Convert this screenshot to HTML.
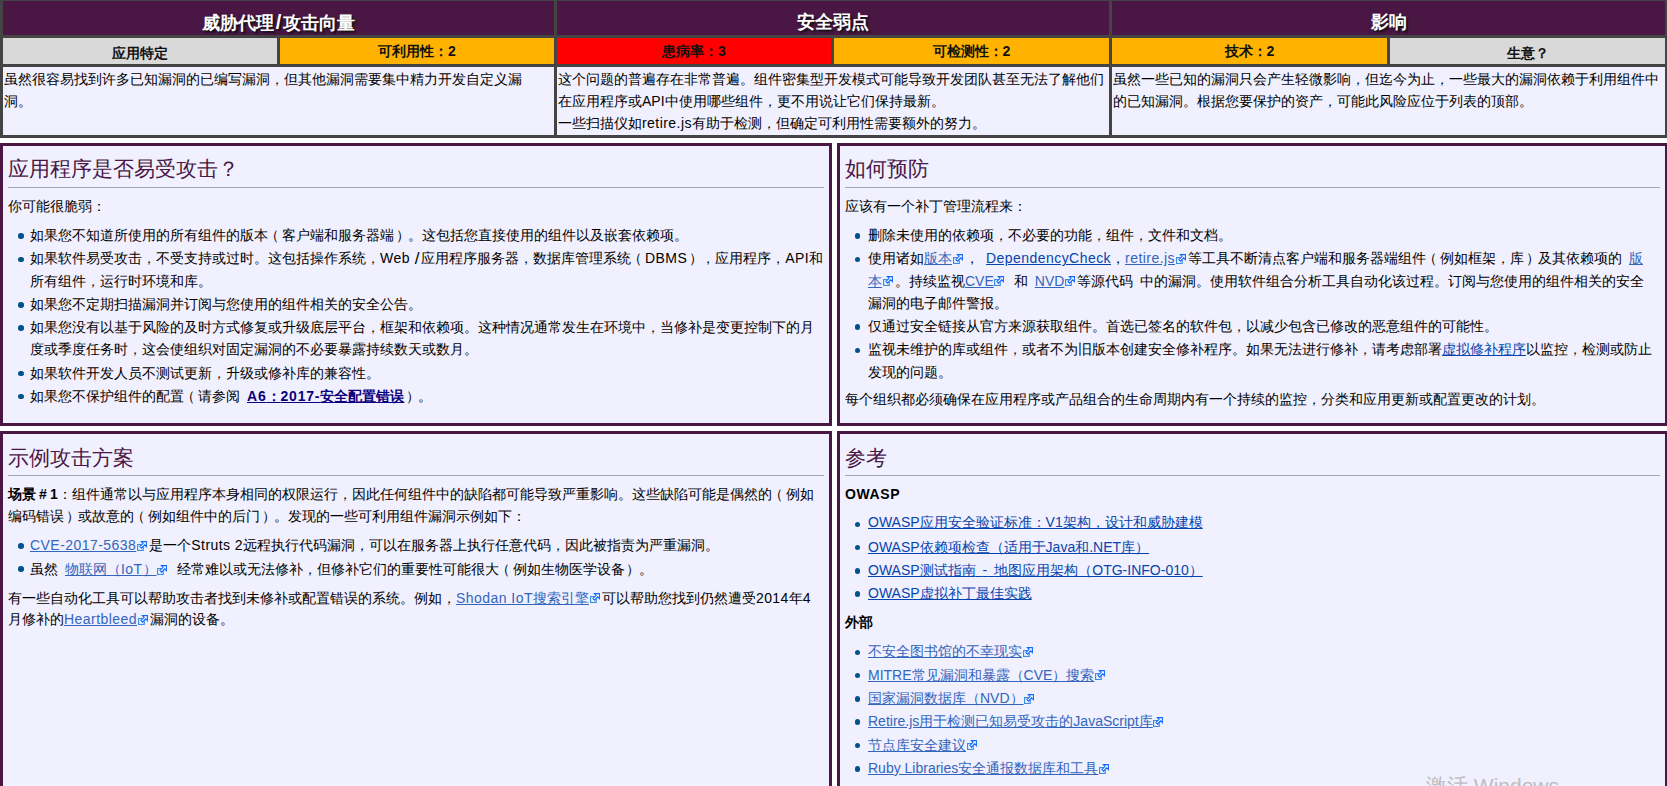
<!DOCTYPE html>
<html lang="ja"><head><meta charset="utf-8"><style>
*{box-sizing:border-box}
html,body{margin:0;padding:0;background:#fff;overflow:hidden}
body{width:1667px;height:786px;position:relative;font-family:"Liberation Sans",sans-serif;font-size:14px;color:#000}
.c{position:absolute}
.h{background:#4a1745;color:#fff;font-weight:bold;font-size:18px;text-align:center;line-height:42px;text-shadow:2px 2px 2px #111}
.s{font-weight:bold;text-align:center;color:#111}
.g{background:#d9d9d9}.o{background:#ffb300}.r{background:#ff0000}
.ct{background:#f0f0ff}
.box{position:absolute;border:3px solid #4a1745;background:#f0f0ff}
.ln{position:absolute;white-space:nowrap;line-height:22px}
.ttl{position:absolute;white-space:nowrap;font-size:21px;line-height:30px;color:#4a1745}
.hr{position:absolute;height:1px;background:#a2a9b1}
.d{position:absolute;width:5.5px;height:5.5px;border-radius:50%;background:#00528c}
a{text-decoration:underline}
.x{color:#3366bb}
.i{color:#0645ad}
.v{color:#0b0080}
b{font-weight:bold;color:#000}
.v b{color:#0b0080}
.e{display:inline-block;width:13px;height:10px;position:relative;vertical-align:0px}
.e svg{position:absolute;left:0.7px;top:0.5px}
.sp{word-spacing:3.1px}
.sp3{display:inline-block;width:3px}
.l{letter-spacing:0.45px}
.lb{letter-spacing:0.8px}
.lp{position:relative;left:-3px}
.rp{position:relative;left:1.5px}
.wm{position:absolute;white-space:nowrap;font-size:21px;color:#bdbdc2;line-height:30px}
</style></head><body>
<div class="c" style="left:0;top:-2px;width:1668px;height:140px;background:#444"></div>
<div class="c h" style="left:3px;top:1px;width:551px;height:34px">威胁代理<span style="margin:0 2px;font-size:20px">/</span>攻击向量</div>
<div class="c h" style="left:557px;top:1px;width:552px;height:34px">安全弱点</div>
<div class="c h" style="left:1112px;top:1px;width:553px;height:34px">影响</div>
<div class="c s g" style="left:3px;top:38px;width:274px;height:26px;line-height:30px">应用特定</div>
<div class="c s o" style="left:280px;top:38px;width:274px;height:26px;line-height:26px">可利用性：2</div>
<div class="c s r" style="left:557px;top:38px;width:274px;height:26px;line-height:26px">患病率：3</div>
<div class="c s o" style="left:834px;top:38px;width:275px;height:26px;line-height:26px">可检测性：2</div>
<div class="c s o" style="left:1112px;top:38px;width:275px;height:26px;line-height:26px">技术：2</div>
<div class="c s g" style="left:1390px;top:38px;width:275px;height:26px;line-height:30px">生意？</div>
<div class="c ct" style="left:3px;top:67px;width:551px;height:68px"></div>
<div class="c ct" style="left:557px;top:67px;width:552px;height:68px"></div>
<div class="c ct" style="left:1112px;top:67px;width:553px;height:68px"></div>
<div class="ln" style="left:4px;top:67.6px">虽然很容易找到许多已知漏洞的已编写漏洞，但其他漏洞需要集中精力开发自定义漏</div>
<div class="ln" style="left:4px;top:90.0px">洞。</div>
<div class="ln" style="left:558px;top:67.6px">这个问题的普遍存在非常普遍。组件密集型开发模式可能导致开发团队甚至无法了解他们</div>
<div class="ln" style="left:558px;top:90.0px">在应用程序或API中使用哪些组件，更不用说让它们保持最新。</div>
<div class="ln" style="left:558px;top:112.4px">一些扫描仪如<span class="l">retire.js</span>有助于检测，但确定可利用性需要额外的努力。</div>
<div class="ln" style="left:1113px;top:67.6px">虽然一些已知的漏洞只会产生轻微影响，但迄今为止，一些最大的漏洞依赖于利用组件中</div>
<div class="ln" style="left:1113px;top:90.0px">的已知漏洞。根据您要保护的资产，可能此风险应位于列表的顶部。</div>
<div class="box" style="left:0;top:143px;width:832px;height:283px"></div>
<div class="box" style="left:837px;top:143px;width:831px;height:283px"></div>
<div class="box" style="left:0;top:431px;width:832px;height:400px"></div>
<div class="box" style="left:837px;top:431px;width:831px;height:400px"></div>
<div class="ttl" style="left:8px;top:154.0px">应用程序是否易受攻击？</div>
<div class="hr" style="left:8px;top:187px;width:816px"></div>
<div class="ln" style="left:8px;top:194.5px">你可能很脆弱：</div>
<div class="d" style="left:18.25px;top:233.45px"></div>
<div class="ln" style="left:30px;top:224.3px">如果您不知道所使用的所有组件的版本<span class="lp">（</span>客户端和服务器端<span class="rp">）</span>。这包括您直接使用的组件以及嵌套依赖项。</div>
<div class="d" style="left:18.25px;top:256.55px"></div>
<div class="ln" style="left:30px;top:247.4px">如果软件易受攻击，不受支持或过时。这包括操作系统，<span class="l">Web </span><span style="font-size:17px;display:inline-block;transform:translateY(1px);margin-left:0.5px;margin-right:1.5px">/</span>应用程序服务器，数据库管理系统<span class="lp">（</span><span class="l">DBMS</span><span class="rp">）</span>，应用程序，<span class="l">API</span>和</div>
<div class="ln" style="left:30px;top:269.8px">所有组件，运行时环境和库。</div>
<div class="d" style="left:18.25px;top:302.05px"></div>
<div class="ln" style="left:30px;top:292.9px">如果您不定期扫描漏洞并订阅与您使用的组件相关的安全公告。</div>
<div class="d" style="left:18.25px;top:325.15px"></div>
<div class="ln" style="left:30px;top:316.0px">如果您没有以基于风险的及时方式修复或升级底层平台，框架和依赖项。这种情况通常发生在环境中，当修补是变更控制下的月</div>
<div class="ln" style="left:30px;top:338.4px">度或季度任务时，这会使组织对固定漏洞的不必要暴露持续数天或数月。</div>
<div class="d" style="left:18.25px;top:370.65px"></div>
<div class="ln" style="left:30px;top:361.5px">如果软件开发人员不测试更新，升级或修补库的兼容性。</div>
<div class="d" style="left:18.25px;top:393.75px"></div>
<div class="ln" style="left:30px;top:384.6px">如果您不保护组件的配置<span class="lp">（</span>请参阅<span class="sp"> </span><a class="v"><b><span class="lb">A6</span>：<span class="lb">2017-</span>安全配置错误</b></a><span class="rp">）</span>。</div>
<div class="ttl" style="left:845px;top:154.0px">如何预防</div>
<div class="hr" style="left:845px;top:187px;width:815px"></div>
<div class="ln" style="left:845px;top:194.8px">应该有一个补丁管理流程来：</div>
<div class="d" style="left:854.95px;top:233.45px"></div>
<div class="ln" style="left:868px;top:224.3px">删除未使用的依赖项，不必要的功能，组件，文件和文档。</div>
<div class="d" style="left:854.95px;top:256.55px"></div>
<div class="ln" style="left:868px;top:247.4px">使用诸如<a class="x">版本</a><i class="e"><svg width="10" height="10" viewBox="0 0 10 10"><rect x="0.6" y="3.6" width="5.6" height="5.8" fill="#fff" stroke="#3f8de0" stroke-width="1.2"/><path d="M4.4 0.6H9.4V5.6L7.7 3.9L4.5 7.1L2.9 5.5L6.1 2.3Z" fill="#fff" stroke="#0f68ff" stroke-width="1.1" stroke-linejoin="miter"/></svg></i>，<span class="sp"> </span><a class="i"><span class="l">DependencyCheck</span></a>，<a class="x"><span class="l">retire.js</span></a><i class="e"><svg width="10" height="10" viewBox="0 0 10 10"><rect x="0.6" y="3.6" width="5.6" height="5.8" fill="#fff" stroke="#3f8de0" stroke-width="1.2"/><path d="M4.4 0.6H9.4V5.6L7.7 3.9L4.5 7.1L2.9 5.5L6.1 2.3Z" fill="#fff" stroke="#0f68ff" stroke-width="1.1" stroke-linejoin="miter"/></svg></i>等工具不断清点客户端和服务器端组件<span class="lp">（</span>例如框架，库<span class="rp">）</span>及其依赖项的<span class="sp"> </span><a class="x">版</a></div>
<div class="ln" style="left:868px;top:269.8px"><a class="x">本</a><i class="e"><svg width="10" height="10" viewBox="0 0 10 10"><rect x="0.6" y="3.6" width="5.6" height="5.8" fill="#fff" stroke="#3f8de0" stroke-width="1.2"/><path d="M4.4 0.6H9.4V5.6L7.7 3.9L4.5 7.1L2.9 5.5L6.1 2.3Z" fill="#fff" stroke="#0f68ff" stroke-width="1.1" stroke-linejoin="miter"/></svg></i>。持续监视<a class="x">CVE</a><i class="e"><svg width="10" height="10" viewBox="0 0 10 10"><rect x="0.6" y="3.6" width="5.6" height="5.8" fill="#fff" stroke="#3f8de0" stroke-width="1.2"/><path d="M4.4 0.6H9.4V5.6L7.7 3.9L4.5 7.1L2.9 5.5L6.1 2.3Z" fill="#fff" stroke="#0f68ff" stroke-width="1.1" stroke-linejoin="miter"/></svg></i><span class="sp"> </span>和<span class="sp"> </span><a class="x">NVD</a><i class="e"><svg width="10" height="10" viewBox="0 0 10 10"><rect x="0.6" y="3.6" width="5.6" height="5.8" fill="#fff" stroke="#3f8de0" stroke-width="1.2"/><path d="M4.4 0.6H9.4V5.6L7.7 3.9L4.5 7.1L2.9 5.5L6.1 2.3Z" fill="#fff" stroke="#0f68ff" stroke-width="1.1" stroke-linejoin="miter"/></svg></i>等源代码<span class="sp"> </span>中的漏洞。使用软件组合分析工具自动化该过程。订阅与您使用的组件相关的安全</div>
<div class="ln" style="left:868px;top:292.2px">漏洞的电子邮件警报。</div>
<div class="d" style="left:854.95px;top:324.45px"></div>
<div class="ln" style="left:868px;top:315.3px">仅通过安全链接从官方来源获取组件。首选已签名的软件包，以减少包含已修改的恶意组件的可能性。</div>
<div class="d" style="left:854.95px;top:347.55px"></div>
<div class="ln" style="left:868px;top:338.4px">监视未维护的库或组件，或者不为旧版本创建安全修补程序。如果无法进行修补，请考虑部署<a class="i">虚拟修补程序</a>以监控，检测或防止</div>
<div class="ln" style="left:868px;top:360.8px">发现的问题。</div>
<div class="ln" style="left:845px;top:388.3px">每个组织都必须确保在应用程序或产品组合的生命周期内有一个持续的监控，分类和应用更新或配置更改的计划。</div>
<div class="ttl" style="left:8px;top:442.6px">示例攻击方案</div>
<div class="hr" style="left:8px;top:475px;width:816px"></div>
<div class="ln" style="left:8px;top:482.6px"><b>场景<i class="sp3"></i><span style="letter-spacing:3.2px">#</span>1</b>：组件通常以与应用程序本身相同的权限运行，因此任何组件中的缺陷都可能导致严重影响。这些缺陷可能是偶然的<span class="lp">（</span>例如</div>
<div class="ln" style="left:8px;top:505.0px">编码错误<span class="rp">）</span>或故意的<span class="lp">（</span>例如组件中的后门<span class="rp">）</span>。发现的一些可利用组件漏洞示例如下：</div>
<div class="d" style="left:18.25px;top:543.25px"></div>
<div class="ln" style="left:30px;top:534.1px"><a class="x"><span class="l">CVE-2017-5638</span></a><i class="e"><svg width="10" height="10" viewBox="0 0 10 10"><rect x="0.6" y="3.6" width="5.6" height="5.8" fill="#fff" stroke="#3f8de0" stroke-width="1.2"/><path d="M4.4 0.6H9.4V5.6L7.7 3.9L4.5 7.1L2.9 5.5L6.1 2.3Z" fill="#fff" stroke="#0f68ff" stroke-width="1.1" stroke-linejoin="miter"/></svg></i>是一个<span class="l">Struts 2</span>远程执行代码漏洞，可以在服务器上执行任意代码，因此被指责为严重漏洞。</div>
<div class="d" style="left:18.25px;top:566.35px"></div>
<div class="ln" style="left:30px;top:558.4px">虽然<span class="sp"> </span><a class="x">物联网（<span class="l">IoT</span>）</a><i class="e"><svg width="10" height="10" viewBox="0 0 10 10"><rect x="0.6" y="3.6" width="5.6" height="5.8" fill="#fff" stroke="#3f8de0" stroke-width="1.2"/><path d="M4.4 0.6H9.4V5.6L7.7 3.9L4.5 7.1L2.9 5.5L6.1 2.3Z" fill="#fff" stroke="#0f68ff" stroke-width="1.1" stroke-linejoin="miter"/></svg></i><span class="sp"> </span>经常难以或无法修补，但修补它们的重要性可能很大<span class="lp">（</span>例如生物医学设备<span class="rp">）</span>。</div>
<div class="ln" style="left:8px;top:586.8px">有一些自动化工具可以帮助攻击者找到未修补或配置错误的系统。例如，<a class="x"><span class="l">Shodan IoT</span>搜索引擎</a><i class="e"><svg width="10" height="10" viewBox="0 0 10 10"><rect x="0.6" y="3.6" width="5.6" height="5.8" fill="#fff" stroke="#3f8de0" stroke-width="1.2"/><path d="M4.4 0.6H9.4V5.6L7.7 3.9L4.5 7.1L2.9 5.5L6.1 2.3Z" fill="#fff" stroke="#0f68ff" stroke-width="1.1" stroke-linejoin="miter"/></svg></i>可以帮助您找到仍然遭受<span class="l">2014</span>年<span class="l">4</span></div>
<div class="ln" style="left:8px;top:608.2px">月修补的<a class="x"><span class="l">Heartbleed</span></a><i class="e"><svg width="10" height="10" viewBox="0 0 10 10"><rect x="0.6" y="3.6" width="5.6" height="5.8" fill="#fff" stroke="#3f8de0" stroke-width="1.2"/><path d="M4.4 0.6H9.4V5.6L7.7 3.9L4.5 7.1L2.9 5.5L6.1 2.3Z" fill="#fff" stroke="#0f68ff" stroke-width="1.1" stroke-linejoin="miter"/></svg></i>漏洞的设备。</div>
<div class="ttl" style="left:845px;top:442.6px">参考</div>
<div class="hr" style="left:845px;top:475px;width:815px"></div>
<div class="ln" style="left:845px;top:482.6px"><b style="letter-spacing:0.6px">OWASP</b></div>
<div class="d" style="left:854.95px;top:521.75px"></div>
<div class="ln" style="left:868px;top:511.2px"><a class="i">OWASP应用安全验证标准：V1架构，设计和威胁建模</a></div>
<div class="d" style="left:854.95px;top:544.95px"></div>
<div class="ln" style="left:868px;top:535.8px"><a class="i">OWASP依赖项检查（适用于Java和.NET库）</a></div>
<div class="d" style="left:854.95px;top:568.15px"></div>
<div class="ln" style="left:868px;top:559.0px"><a class="i">OWASP测试指南<span class="sp"> </span>-<span class="sp"> </span>地图应用架构（OTG-INFO-010）</a></div>
<div class="d" style="left:854.95px;top:591.35px"></div>
<div class="ln" style="left:868px;top:582.2px"><a class="i">OWASP虚拟补丁最佳实践</a></div>
<div class="ln" style="left:845px;top:610.6px"><b>外部</b></div>
<div class="d" style="left:854.95px;top:649.55px"></div>
<div class="ln" style="left:868px;top:640.4px"><a class="x">不安全图书馆的不幸现实</a><i class="e"><svg width="10" height="10" viewBox="0 0 10 10"><rect x="0.6" y="3.6" width="5.6" height="5.8" fill="#fff" stroke="#3f8de0" stroke-width="1.2"/><path d="M4.4 0.6H9.4V5.6L7.7 3.9L4.5 7.1L2.9 5.5L6.1 2.3Z" fill="#fff" stroke="#0f68ff" stroke-width="1.1" stroke-linejoin="miter"/></svg></i></div>
<div class="d" style="left:854.95px;top:672.85px"></div>
<div class="ln" style="left:868px;top:663.7px"><a class="x">MITRE常见漏洞和暴露（CVE）搜索</a><i class="e"><svg width="10" height="10" viewBox="0 0 10 10"><rect x="0.6" y="3.6" width="5.6" height="5.8" fill="#fff" stroke="#3f8de0" stroke-width="1.2"/><path d="M4.4 0.6H9.4V5.6L7.7 3.9L4.5 7.1L2.9 5.5L6.1 2.3Z" fill="#fff" stroke="#0f68ff" stroke-width="1.1" stroke-linejoin="miter"/></svg></i></div>
<div class="d" style="left:854.95px;top:696.15px"></div>
<div class="ln" style="left:868px;top:687.0px"><a class="x">国家漏洞数据库（NVD）</a><i class="e"><svg width="10" height="10" viewBox="0 0 10 10"><rect x="0.6" y="3.6" width="5.6" height="5.8" fill="#fff" stroke="#3f8de0" stroke-width="1.2"/><path d="M4.4 0.6H9.4V5.6L7.7 3.9L4.5 7.1L2.9 5.5L6.1 2.3Z" fill="#fff" stroke="#0f68ff" stroke-width="1.1" stroke-linejoin="miter"/></svg></i></div>
<div class="d" style="left:854.95px;top:719.45px"></div>
<div class="ln" style="left:868px;top:710.3px"><a class="x">Retire.js用于检测已知易受攻击的JavaScript库</a><i class="e"><svg width="10" height="10" viewBox="0 0 10 10"><rect x="0.6" y="3.6" width="5.6" height="5.8" fill="#fff" stroke="#3f8de0" stroke-width="1.2"/><path d="M4.4 0.6H9.4V5.6L7.7 3.9L4.5 7.1L2.9 5.5L6.1 2.3Z" fill="#fff" stroke="#0f68ff" stroke-width="1.1" stroke-linejoin="miter"/></svg></i></div>
<div class="d" style="left:854.95px;top:742.85px"></div>
<div class="ln" style="left:868px;top:733.7px"><a class="x">节点库安全建议</a><i class="e"><svg width="10" height="10" viewBox="0 0 10 10"><rect x="0.6" y="3.6" width="5.6" height="5.8" fill="#fff" stroke="#3f8de0" stroke-width="1.2"/><path d="M4.4 0.6H9.4V5.6L7.7 3.9L4.5 7.1L2.9 5.5L6.1 2.3Z" fill="#fff" stroke="#0f68ff" stroke-width="1.1" stroke-linejoin="miter"/></svg></i></div>
<div class="d" style="left:854.95px;top:766.15px"></div>
<div class="ln" style="left:868px;top:757.0px"><a class="x">Ruby Libraries安全通报数据库和工具</a><i class="e"><svg width="10" height="10" viewBox="0 0 10 10"><rect x="0.6" y="3.6" width="5.6" height="5.8" fill="#fff" stroke="#3f8de0" stroke-width="1.2"/><path d="M4.4 0.6H9.4V5.6L7.7 3.9L4.5 7.1L2.9 5.5L6.1 2.3Z" fill="#fff" stroke="#0f68ff" stroke-width="1.1" stroke-linejoin="miter"/></svg></i></div>
<div class="wm" style="left:1426px;top:771px">激活 Windows</div>
</body></html>
